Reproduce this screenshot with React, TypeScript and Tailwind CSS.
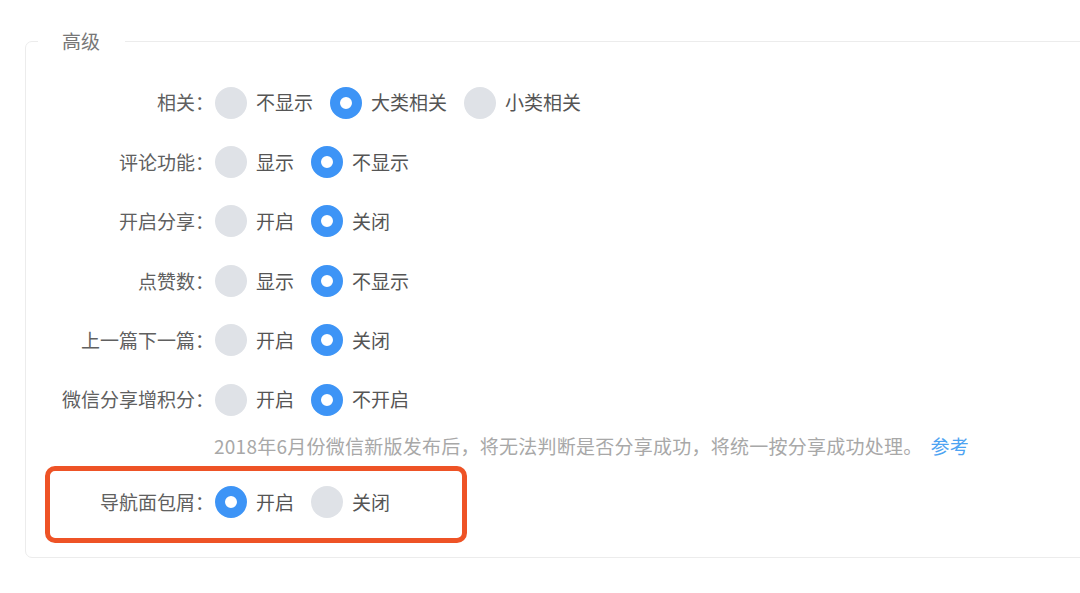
import React from "react";

type Row = { label: string; options: string[]; selected: number };

const rows: Row[] = [
  { label: "相关：", options: ["不显示", "大类相关", "小类相关"], selected: 1 },
  { label: "评论功能：", options: ["显示", "不显示"], selected: 1 },
  { label: "开启分享：", options: ["开启", "关闭"], selected: 1 },
  { label: "点赞数：", options: ["显示", "不显示"], selected: 1 },
  { label: "上一篇下一篇：", options: ["开启", "关闭"], selected: 1 },
  { label: "微信分享增积分：", options: ["开启", "不开启"], selected: 1 },
];

function Radio({ checked }: { checked: boolean }) {
  return checked ? (
    <span className="block w-[32px] h-[32px] rounded-full border-[10px] border-[#3d94f6] bg-white shrink-0" />
  ) : (
    <span className="block w-[32px] h-[32px] rounded-full bg-[#dfe2e7] shrink-0" />
  );
}

function OptionRow({ row }: { row: Row }) {
  return (
    <div className="flex items-center h-[59.4px]">
      <div className="w-[188px] text-right text-[19px] text-[#606060] shrink-0">{row.label}</div>
      <div className="flex items-center gap-[17px] ml-[1px]">
        {row.options.map((opt, i) => (
          <label key={opt} className="flex items-center gap-[9px] text-[19px] text-[#555]">
            <Radio checked={i === row.selected} />
            <span>{opt}</span>
          </label>
        ))}
      </div>
    </div>
  );
}

export default function App() {
  return (
    <div
      className="w-[1080px] h-[593px] overflow-hidden bg-white"
      style={{ fontFamily: '"Noto Sans CJK SC", "Noto Sans", sans-serif' }}
    >
      <fieldset className="m-0 mt-[29px] ml-[25px] p-0 pb-[25px] w-[1100px] border border-[#ececec] rounded-[7px]">
        <legend className="ml-[12px] pl-[24px] pr-[25px] leading-[24px] text-[19px] text-[#777]">高级</legend>

        <div className="pt-[20px]">
          {rows.map((r) => (
            <OptionRow key={r.label} row={r} />
          ))}

          {/* 提示 */}
          <div className="h-[43px] leading-[33px] pl-[188px] text-[19px] text-[#a8a8a8] tracking-[0.25px]">
            2018年6月份微信新版发布后，将无法判断是否分享成功，将统一按分享成功处理。
            <span className="ml-[8px] text-[#4ea3f2]">参考</span>
          </div>

          {/* 导航面包屑 + 标注框 */}
          <div className="relative">
            <OptionRow row={{ label: "导航面包屑：", options: ["开启", "关闭"], selected: 0 }} />
            <div className="absolute left-[19px] top-[-6px] w-[422px] h-[77px] border-[5px] border-[#ee5326] rounded-[10px] pointer-events-none" />
          </div>
        </div>
      </fieldset>
    </div>
  );
}
